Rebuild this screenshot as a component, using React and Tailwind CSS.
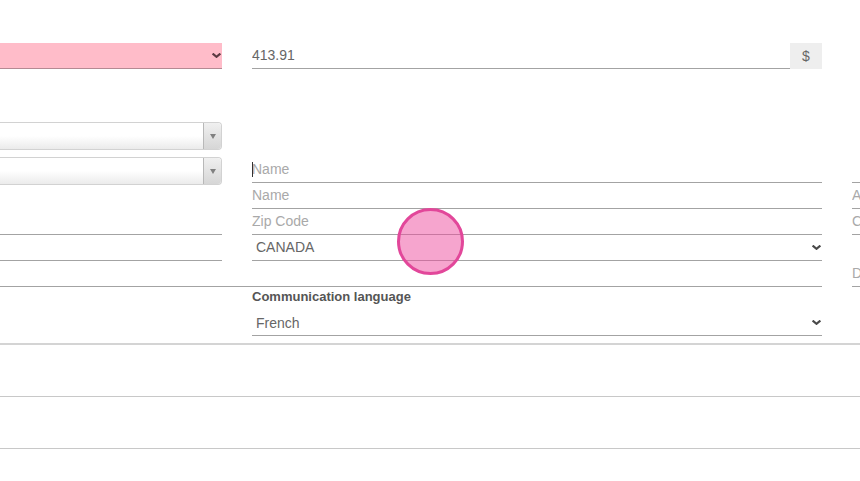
import React from 'react';

const fieldClass = 'block w-full h-[26px] px-0 pb-[2px] bg-transparent border-0 border-b border-[#a3a3a3] text-sm text-[#666] placeholder:text-[#a9a9a9] outline-none';

const Field = ({ placeholder, className = '', value }) => (
  <input type="text" placeholder={placeholder} defaultValue={value} className={`${fieldClass} ${className}`} />
);

const Chevron = ({ color = '#4a4a4a' }) => (
  <svg viewBox="0 0 9 5" className="pointer-events-none absolute right-[1px] top-[10px] h-[5px] w-[9px]" fill="none" stroke={color} strokeWidth="2.2">
    <path d="M0.6 0.6 L4.5 3.8 L8.4 0.6" />
  </svg>
);

const Select = ({ value, className = '' }) => (
  <div className="relative">
    <select defaultValue={value} className={`block h-[26px] w-full appearance-none border-0 border-b border-[#a3a3a3] bg-white pl-1 text-sm text-[#666] outline-none ${className}`}>
      <option>{value}</option>
    </select>
    <Chevron />
  </div>
);

const ComboBox = ({ className = '' }) => (
  <div className={`flex h-[28px] rounded-r-[4px] border border-l-0 border-[#d2d2d2] bg-gradient-to-b from-white from-50% to-[#ebebeb] ${className}`}>
    <div className="flex-1" />
    <div className="flex w-[18px] items-center justify-center rounded-r-[4px] border-l border-[#b8b8b8] bg-gradient-to-b from-[#f0f0f0] to-[#d6d6d6]">
      <span className="mt-px h-0 w-0 border-x-[3px] border-t-[5px] border-x-transparent border-t-[#808080]" />
    </div>
  </div>
);

export default function App() {
  return (
    <div className="relative h-[481px] w-[860px] overflow-hidden bg-white font-['Liberation_Sans',Arial,sans-serif]">
      <div className="flex gap-[30px] pt-[43px]">
        <div className="relative w-[222px] shrink-0">
          <select className="block h-[26px] w-full appearance-none border-0 border-b border-[#b58a93] bg-[#ffbcc9] text-sm outline-none" />
          <Chevron color="#5c3a42" />
        </div>
        <div className="flex w-[570px] shrink-0">
          <Field value="413.91" className="flex-1" />
          <div className="flex h-[26px] w-[32px] items-center justify-center bg-[#eeeeee] text-sm text-[#666]">$</div>
        </div>
      </div>

      <ComboBox className="mt-[53px] w-[222px]" />

      <div className="mt-[7px] grid grid-cols-[222px_570px_100px] grid-rows-[repeat(5,26px)] gap-x-[30px]">
        <ComboBox className="row-span-2" />
        <div className="relative">
          <Field placeholder="Name" />
          <span className="absolute left-0 top-[5px] h-[15px] w-px bg-[#333]" />
        </div>
        <Field />
        <Field placeholder="Name" className="col-start-2" />
        <Field placeholder="Address" />
        <Field className="col-start-1" />
        <Field placeholder="Zip Code" />
        <Field placeholder="City" />
        <Field className="col-start-1" />
        <Select value="CANADA" className="pb-[2px]" />
        <div />
        <Field className="col-span-2 w-[822px]" />
        <Field placeholder="Date" />
      </div>

      <div className="ml-[252px] w-[570px]">
        <div className="h-[23px] pt-[2px] text-[13px] font-bold leading-[16px] text-[#555]">Communication language</div>
        <Select value="French" />
      </div>

      <div className="mt-[7px] h-[53px] border-t-2 border-[#d4d4d4]" />
      <div className="h-[52px] border-t border-[#c8c8c8]" />
      <div className="border-t border-[#c8c8c8]" />

      <div className="absolute left-[397px] top-[208px] h-[67px] w-[67px] rounded-full border-[3px] border-[#e2479a] bg-[#ee4b9e]/50" />
    </div>
  );
}
